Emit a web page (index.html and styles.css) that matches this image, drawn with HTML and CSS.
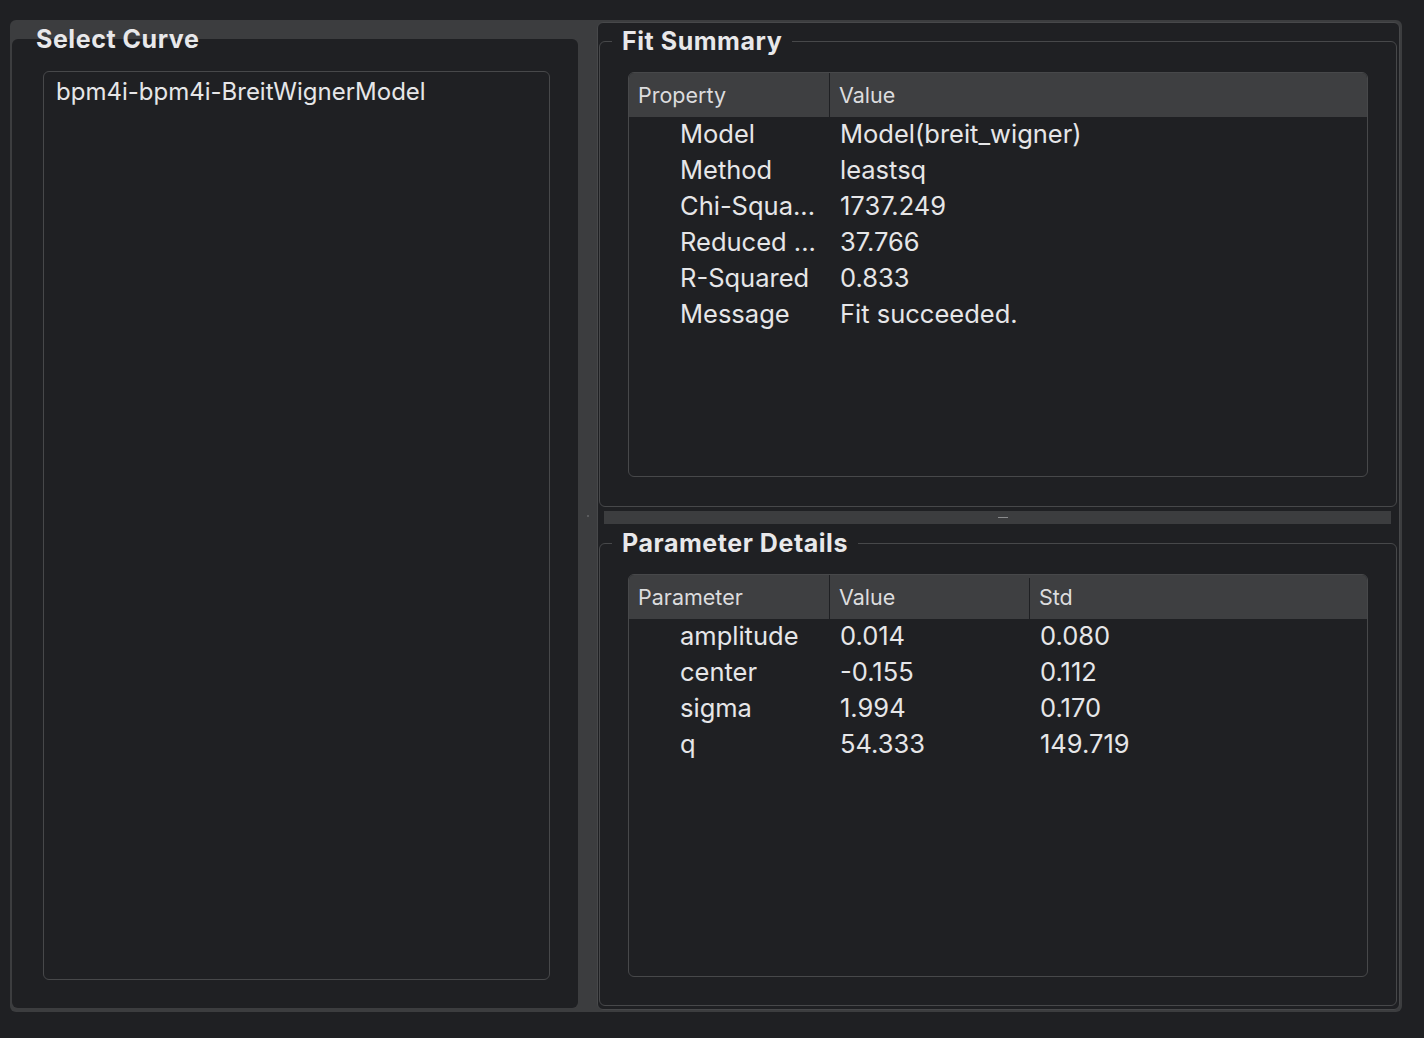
FILE: index.html
```html
<!DOCTYPE html>
<html lang="en">
<head>
<meta charset="utf-8">
<title>Fit Results</title>
<link rel="stylesheet" href="styles.css">
</head>
<body>
<div class="page">
  <div class="frame">
    <fieldset class="group group-left">
      <legend class="group-title">Select Curve</legend>
      <div class="list-box">
        <div class="list-item">bpm4i-bpm4i-BreitWignerModel</div>
      </div>
    </fieldset>
    <div class="hsplit"><span class="grip-dot"></span></div>
    <div class="right">
      <fieldset class="group group-top">
        <legend class="group-title">Fit Summary</legend>
        <div class="table table-top">
          <div class="thead">
            <div class="th c1">Property</div>
            <div class="th c2 last">Value</div>
          </div>
          <div class="row"><div class="td c1">Model</div><div class="td c2">Model(breit_wigner)</div></div>
          <div class="row"><div class="td c1">Method</div><div class="td c2">leastsq</div></div>
          <div class="row"><div class="td c1">Chi-Squa...</div><div class="td c2">1737.249</div></div>
          <div class="row"><div class="td c1">Reduced ...</div><div class="td c2">37.766</div></div>
          <div class="row"><div class="td c1">R-Squared</div><div class="td c2">0.833</div></div>
          <div class="row"><div class="td c1">Message</div><div class="td c2">Fit succeeded.</div></div>
        </div>
      </fieldset>
      <div class="vsplit"><span class="grip-dash"></span></div>
      <fieldset class="group group-bottom">
        <legend class="group-title">Parameter Details</legend>
        <div class="table table-bottom">
          <div class="thead">
            <div class="th c1">Parameter</div>
            <div class="th c2">Value</div>
            <div class="th c3 last">Std</div>
          </div>
          <div class="row"><div class="td c1">amplitude</div><div class="td c2">0.014</div><div class="td c3">0.080</div></div>
          <div class="row"><div class="td c1">center</div><div class="td c2">-0.155</div><div class="td c3">0.112</div></div>
          <div class="row"><div class="td c1">sigma</div><div class="td c2">1.994</div><div class="td c3">0.170</div></div>
          <div class="row"><div class="td c1">q</div><div class="td c2">54.333</div><div class="td c3">149.719</div></div>
        </div>
      </fieldset>
    </div>
  </div>
</div>
</body>
</html>
```
FILE: styles.css
```css
* { box-sizing: border-box; }
html, body {
  margin: 0;
  padding: 0;
  background: #1f2023;
  color: #e6e6e8;
  font-family: Inter, "Noto Sans", "Liberation Sans", sans-serif;
}
.page {
  width: 1424px;
  height: 1038px;
  padding: 20px 0 0 10px;
}
.frame {
  width: 1392px;
  height: 992px;
  background: #3c3d3f;
  border-radius: 6px;
  display: flex;
  padding: 2px 2px 2px 2px;
}
.group {
  margin: 0;
  min-width: 0;
  padding: 0;
}
.group-title {
  font-weight: 700;
  font-size: 25px;
  letter-spacing: 0.55px;
  line-height: 28px;
  height: 28px;
  color: #e8e8ea;
  padding: 0 10px;
  margin-left: -16px;
}
.group-left {
  width: 566px;
  margin: 3px 0 2px 0;
  background: #1f2023;
  border: 0;
  border-radius: 6px;
  padding: 18px 28px 28px 31px;
  display: flex;
  flex-direction: column;
}
.group-left .group-title {
  margin-left: -7px;
  padding: 0 2px 0 0;
}
.list-box {
  flex: 1;
  border: 1px solid #47484a;
  border-radius: 6px;
  padding: 6px 12px;
}
.list-item {
  font-size: 24px;
  line-height: 28px;
}
.hsplit {
  width: 19px;
  display: flex;
  justify-content: center;
  align-items: flex-start;
}
.grip-dot {
  width: 2px;
  height: 2px;
  margin-top: 493px;
  background: #5a5b5d;
}
.right {
  flex: 1;
  background: #1f2023;
  border: 1px solid #47484a;
  border-radius: 6px;
  display: flex;
  flex-direction: column;
  padding: 0 2px 3px 1px;
}
.group-top,
.group-bottom {
  border: 1px solid #47484a;
  border-radius: 6px;
  padding: 17px 28px 0 28px;
}
.group-top {
  margin-top: 4px;
  height: 480px;
}
.group-bottom {
  flex: 1;
}
.vsplit {
  height: 13px;
  margin: 4px 6px 5px 5px;
  background: #3c3d3f;
  display: flex;
  justify-content: center;
}
.grip-dash {
  width: 10px;
  height: 1px;
  margin-top: 6px;
  margin-left: 10px;
  background: #8a8b8d;
}
.table {
  border: 1px solid #47484a;
  border-radius: 6px;
  overflow: hidden;
}
.table-top { height: 405px; }
.table-bottom { height: 403px; }
.thead {
  display: flex;
  height: 44px;
  background: #3e3f41;
  font-size: 21.5px;
  color: #dcdcde;
}
.th {
  display: flex;
  align-items: center;
  padding-left: 9px;
  padding-bottom: 4px;
  border-right: 1px solid #1f2023;
  margin-top: 3px;
}
.th.last { border-right: 0; flex: 1; }
.th.c1 { width: 201px; margin-top: 0; padding-bottom: 1px; }
.th.c2 { width: 200px; }
.row {
  display: flex;
  height: 36px;
  align-items: center;
  padding-bottom: 3px;
  font-size: 25.5px;
}
.td { white-space: nowrap; }
.td.c1 { width: 201px; padding-left: 51px; }
.td.c2 { width: 200px; padding-left: 10px; }
.td.c3 { padding-left: 10px; }
```
